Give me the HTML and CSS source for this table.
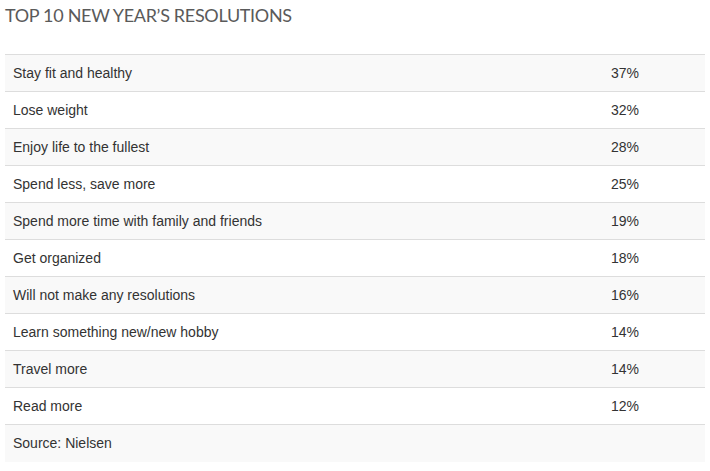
FILE: index.html
```html
<!DOCTYPE html>
<html>
<head>
<meta charset="utf-8">
<link rel="stylesheet" href="styles.css">
</head>
<body>
<h2 class="title">TOP 10 NEW YEAR’S RESOLUTIONS</h2>
<table class="res">
<tbody>
<tr><td>Stay fit and healthy</td><td class="pct">37%</td></tr>
<tr><td>Lose weight</td><td class="pct">32%</td></tr>
<tr><td>Enjoy life to the fullest</td><td class="pct">28%</td></tr>
<tr><td>Spend less, save more</td><td class="pct">25%</td></tr>
<tr><td>Spend more time with family and friends</td><td class="pct">19%</td></tr>
<tr><td>Get organized</td><td class="pct">18%</td></tr>
<tr><td>Will not make any resolutions</td><td class="pct">16%</td></tr>
<tr><td>Learn something new/new hobby</td><td class="pct">14%</td></tr>
<tr><td>Travel more</td><td class="pct">14%</td></tr>
<tr><td>Read more</td><td class="pct">12%</td></tr>
<tr class="src"><td colspan="2">Source: Nielsen</td></tr>
</tbody>
</table>
</body>
</html>
```
FILE: styles.css
```css
html, body {
  margin: 0;
  padding: 0;
  background: #fff;
}
body {
  padding: 0 5px;
  font-family: "Liberation Sans", Arial, sans-serif;
}
.title {
  margin: 0;
  padding-top: 5px;
  height: 54px;
  box-sizing: border-box;
  font-family: "Lato", sans-serif;
  font-weight: 400;
  font-size: 18px;
  line-height: 20px;
  color: #5a5a5a;
  letter-spacing: -0.32px;
}
.res {
  width: 700px;
  border-collapse: collapse;
  font-size: 14px;
  color: #333;
}
.res td {
  height: 37px;
  padding: 0 8px;
  border-top: 1px solid #ddd;
  vertical-align: middle;
  box-sizing: border-box;
}
.res tr:nth-child(odd) td {
  background: #f9f9f9;
}
.res td.pct {
  width: 102px;
}
```
